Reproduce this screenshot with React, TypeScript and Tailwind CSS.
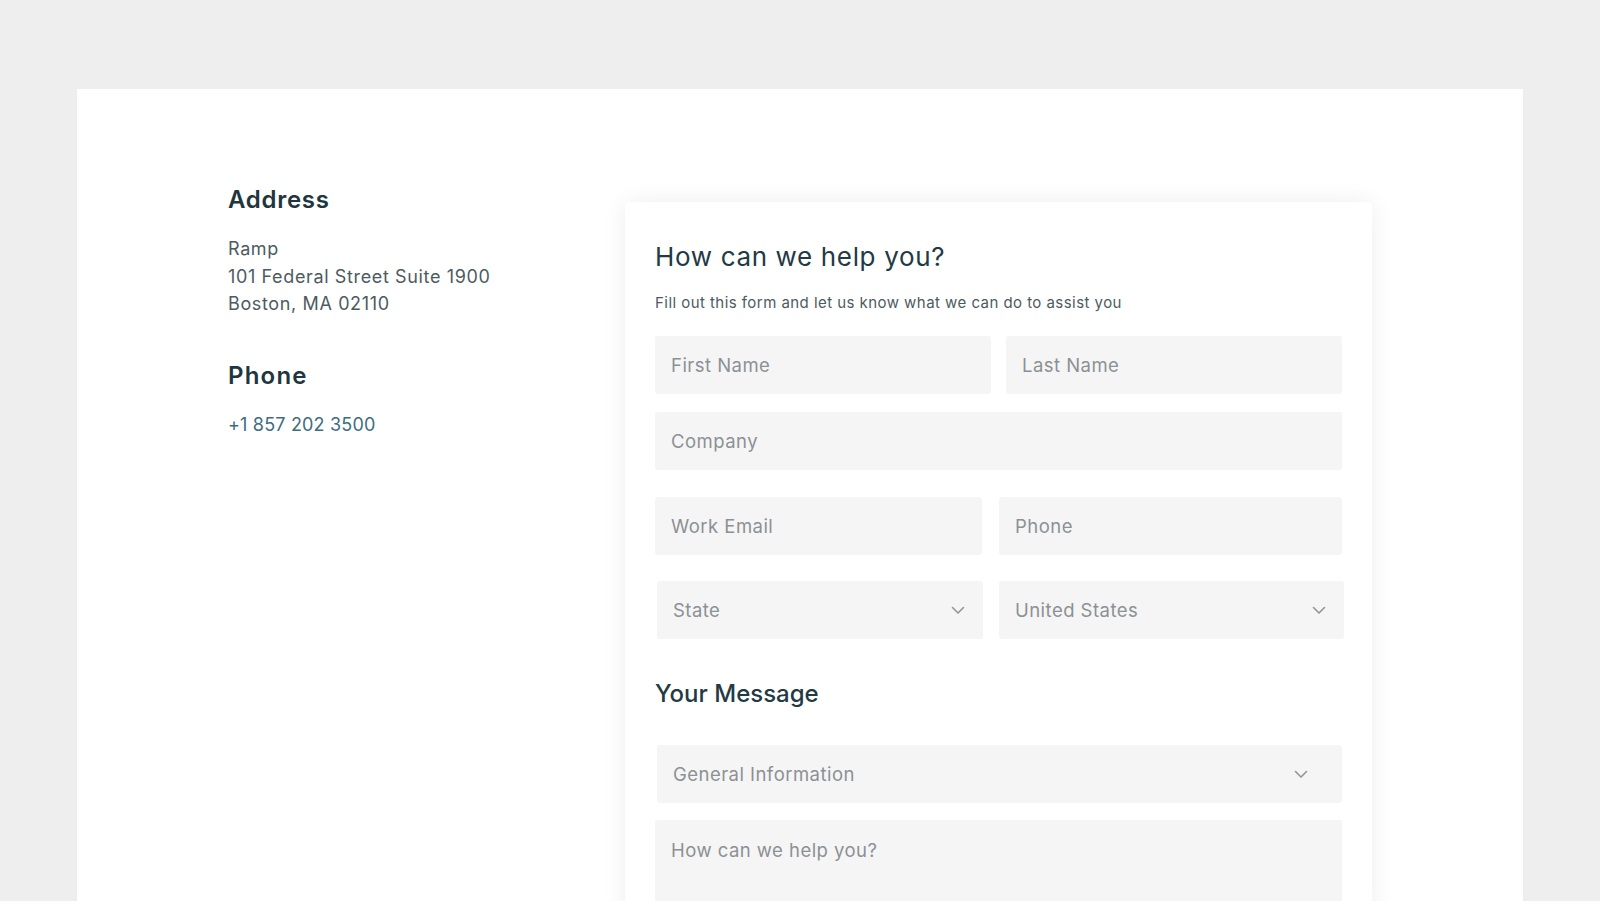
import React from "react";

const Chevron = () => (
  <svg width="14" height="9" viewBox="0 0 14 9" fill="none" className="shrink-0">
    <path d="M1.5 1.5L7 7L12.5 1.5" stroke="#8f9699" strokeWidth="1.6" strokeLinecap="round" strokeLinejoin="round" />
  </svg>
);

const Field = ({ label, className = "" }: { label: string; className?: string }) => (
  <div className={`h-[58px] bg-[#f5f5f5] rounded-[3px] flex items-center px-[16px] pt-[2px] text-[18.5px] tracking-[0.025em] text-[#8b9194] ${className}`}>
    {label}
  </div>
);

const SelectField = ({ label, className = "" }: { label: string; className?: string }) => (
  <div className={`h-[58px] bg-[#f5f5f5] rounded-[3px] flex items-center justify-between pl-[16px] pr-[18px] text-[18.5px] tracking-[0.025em] text-[#8b9194] ${className}`}>
    <span className="pt-[2px]">{label}</span>
    <Chevron />
  </div>
);

export default function App() {
  return (
    <div
      className="min-h-[901px] h-[901px] overflow-hidden bg-[#eeeeee] pt-[89px] px-[77px]"
      style={{ fontFamily: "Inter, 'Open Sans', sans-serif" }}
    >
      <div className="bg-white h-[812px] pl-[151px] pt-[97px] flex items-start">
        <div className="w-[397px] shrink-0">
          <h3 className="text-[24px] leading-[28px] font-semibold tracking-[0.03em] text-[#1f3640]">Address</h3>
          <div className="mt-[21px] text-[18px] leading-[27.5px] tracking-[0.035em] text-[#4d5b61]">
            <div>Ramp</div>
            <div>101 Federal Street Suite 1900</div>
            <div>Boston, MA 02110</div>
          </div>
          <h3 className="mt-[44px] text-[24px] leading-[28px] font-semibold tracking-[0.05em] text-[#1f3640]">Phone</h3>
          <div className="mt-[21px] text-[18px] leading-[27.5px] tracking-[0.01em] text-[#3d6d80]">+1 857 202 3500</div>
        </div>
        <div className="mt-[16px] w-[747px] h-[720px] bg-white rounded-[4px] shadow-[0_0_24px_rgba(0,0,0,0.07)] pt-[40px] px-[30px]">
          <h2 className="text-[26px] leading-[30px] font-normal tracking-[0.025em] text-[#233a44]">How can we help you?</h2>
          <p className="mt-[21px] text-[15px] leading-[20px] tracking-[0.03em] text-[#4d5b61]">
            Fill out this form and let us know what we can do to assist you
          </p>
          <div className="mt-[23px] grid grid-cols-2 gap-[15px]">
            <Field label="First Name" />
            <Field label="Last Name" />
          </div>
          <Field label="Company" className="mt-[18px]" />
          <div className="mt-[27px] grid grid-cols-[327px_1fr] gap-[17px]">
            <Field label="Work Email" />
            <Field label="Phone" />
          </div>
          <div className="mt-[26px] grid grid-cols-[326px_1fr] gap-[16px] ml-[2px] mr-[-2px]">
            <SelectField label="State" />
            <SelectField label="United States" />
          </div>
          <h3 className="mt-[41px] text-[24px] leading-[28px] font-medium tracking-[0] text-[#233a44]">Your Message</h3>
          <SelectField label="General Information" className="mt-[37px] ml-[2px] pr-[34px]" />
          <div className="mt-[17px] h-[160px] bg-[#f5f5f5] rounded-[3px] px-[16px] pt-[17px] text-[18.5px] tracking-[0.025em] text-[#8b9194]">
            How can we help you?
          </div>
        </div>
      </div>
    </div>
  );
}
